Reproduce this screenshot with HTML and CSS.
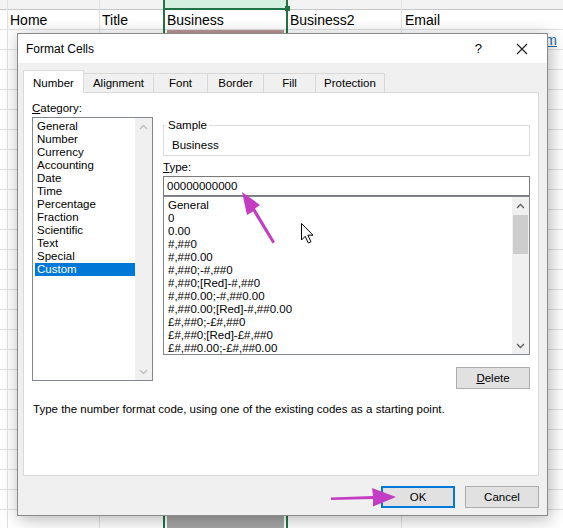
FILE: index.html
```html
<!DOCTYPE html>
<html lang="en">
<head>
    <meta charset="UTF-8">
    <title>Format Cells</title>
    <link rel="stylesheet" href="styles.css">
</head>
<body>

    <!-- Spreadsheet behind the dialog -->
    <div class="sheet">
        <div class="col c0"><div class="hd"></div><div class="cell"></div></div>
        <div class="col c1"><div class="hd"></div><div class="cell">Home</div></div>
        <div class="col c2"><div class="hd"></div><div class="cell">Title</div></div>
        <div class="col c3 sel">
            <div class="hd"></div>
            <div class="cell">Business</div>
            <div class="shade-top"></div>
            <div class="shade"></div>
        </div>
        <div class="col c4"><div class="hd"></div><div class="cell">Business2</div></div>
        <div class="col c5">
            <div class="hd"></div>
            <div class="cell">Email</div>
            <div class="cell link-cell"><a class="link">a@b.com</a></div>
        </div>
    </div>

    <!-- Format Cells dialog -->
    <div class="dialog">
        <div class="titlebar">
            <span class="title">Format Cells</span>
            <span class="help">?</span>
            <svg class="close" width="12" height="12" viewBox="0 0 12 12">
                <path d="M1 1 L11 11 M11 1 L1 11" stroke="#1a1a1a" stroke-width="1.1" fill="none"/>
            </svg>
        </div>

        <div class="dlg-body">
            <div class="tabs">
                <div class="tab active">Number</div>
                <div class="tab">Alignment</div>
                <div class="tab">Font</div>
                <div class="tab">Border</div>
                <div class="tab">Fill</div>
                <div class="tab">Protection</div>
            </div>

            <div class="panel">
                <div class="cols">
                    <div class="left">
                        <div class="label"><u>C</u>ategory:</div>
                        <div class="listbox cat-list">
                            <ul class="items">
                                <li>General</li>
                                <li>Number</li>
                                <li>Currency</li>
                                <li>Accounting</li>
                                <li>Date</li>
                                <li>Time</li>
                                <li>Percentage</li>
                                <li>Fraction</li>
                                <li>Scientific</li>
                                <li>Text</li>
                                <li>Special</li>
                                <li class="picked">Custom</li>
                            </ul>
                            <div class="scroll disabled">
                                <svg class="chev" width="9" height="6" viewBox="0 0 9 6"><path d="M1 5 L4.5 1.5 L8 5" stroke="currentColor" stroke-width="1.3" fill="none"/></svg>
                                <div class="track"></div>
                                <svg class="chev" width="9" height="6" viewBox="0 0 9 6"><path d="M1 1 L4.5 4.5 L8 1" stroke="currentColor" stroke-width="1.3" fill="none"/></svg>
                            </div>
                        </div>
                    </div>

                    <div class="right">
                        <fieldset class="sample">
                            <legend>Sample</legend>
                            <div class="sample-value">Business</div>
                        </fieldset>

                        <div class="label type-label"><u>T</u>ype:</div>
                        <div class="type-input">00000000000</div>

                        <div class="listbox fmt-list">
                            <ul class="items">
                                <li>General</li>
                                <li>0</li>
                                <li>0.00</li>
                                <li>#,##0</li>
                                <li>#,##0.00</li>
                                <li>#,##0;-#,##0</li>
                                <li>#,##0;[Red]-#,##0</li>
                                <li>#,##0.00;-#,##0.00</li>
                                <li>#,##0.00;[Red]-#,##0.00</li>
                                <li>£#,##0;-£#,##0</li>
                                <li>£#,##0;[Red]-£#,##0</li>
                                <li>£#,##0.00;-£#,##0.00</li>
                            </ul>
                            <div class="scroll">
                                <svg class="chev" width="9" height="6" viewBox="0 0 9 6"><path d="M1 5 L4.5 1.5 L8 5" stroke="currentColor" stroke-width="1.3" fill="none"/></svg>
                                <div class="track"><div class="thumb"></div></div>
                                <svg class="chev" width="9" height="6" viewBox="0 0 9 6"><path d="M1 1 L4.5 4.5 L8 1" stroke="currentColor" stroke-width="1.3" fill="none"/></svg>
                            </div>
                        </div>

                        <div class="delete-row">
                            <button class="btn"><u>D</u>elete</button>
                        </div>
                    </div>
                </div>

                <p class="hint">Type the number format code, using one of the existing codes as a starting point.</p>
            </div>

            <div class="footer">
                <button class="btn primary">OK</button>
                <button class="btn">Cancel</button>
            </div>
        </div>
    </div>

    <!-- Annotation arrows and mouse pointer drawn over the screenshot -->
    <svg class="marks" width="563" height="528" viewBox="0 0 563 528">
        <path d="M275 242 L272.5 243.5 L253 211.5 L247 215 L242 192 L260 205 L255 208.5 Z" fill="#c43cc4"/>
        <path d="M331 497.5 L373 496 L372 488 L396 497 L373 506.5 L373 499 L331 500 Z" fill="#c43cc4"/>
        <path d="M301.5 223.5 L301.5 240 L305.2 236.3 L308.3 243 L311 241.8 L307.9 235.2 L313 235.2 Z" fill="#fff" stroke="#000" stroke-width="1" stroke-linejoin="round"/>
    </svg>

</body>
</html>
```

FILE: styles.css
```css
/* Page */
body {
    margin: 0;
    width: 563px;
    height: 528px;
    overflow: hidden;
    position: relative;
    font-family: "Liberation Sans", Arial, sans-serif;
    font-size: 11.5px;
    color: #000;
}

/* Spreadsheet grid */
.sheet {
    display: flex;
    height: 528px;
    background: repeating-linear-gradient(to bottom, #fff 0 19px, #e1e1e1 19px 20px);
    background-position: 0 10px;
    font-size: 14px;
}

.col {
    box-sizing: border-box;
    height: 100%;
    border-right: 1px solid #e1e1e1;
    display: flex;
    flex-direction: column;
}

.c0 { width: 8px; }
.c1 { width: 92px; }
.c2 { width: 63px; border-right: none; }
.c3 { width: 125px; }
.c4 { width: 114px; }
.c5 { flex: 1; border-right: none; }

.hd {
    height: 9px;
    flex: none;
    background: #f3f3f3;
    border-bottom: 1px solid #c6c6c6;
}

.cell {
    height: 19px;
    flex: none;
    padding-left: 2px;
    line-height: 21px;
    white-space: nowrap;
    overflow: hidden;
}

.c5 .cell { padding-left: 3px; }

.link-cell {
    margin-top: 1px;
    text-align: right;
    padding-right: 6px;
}

.link {
    color: #1d6ea8;
    text-decoration: underline;
}

/* Selected column */
.sel {
    border-left: 2px solid #217346;
    border-right: 2px solid #217346;
    position: relative;
}

.sel .hd {
    background: #d3f0e0;
    border-bottom: 2px solid #217346;
    height: 8px;
}

.sel .hd::after {
    content: '';
    position: absolute;
    right: -4px;
    top: 6px;
    width: 5px;
    height: 5px;
    background: #217346;
}

.shade-top {
    height: 19px;
    flex: none;
    margin: 1px 2px 0;
    background: #b99696;
}

.shade {
    flex: 1;
    background: linear-gradient(to bottom, #b5b5b5, #a6a6a6);
    margin: 0 2px;
}

/* Dialog */
.dialog {
    position: absolute;
    left: 17px;
    top: 33px;
    width: 531px;
    height: 483px;
    box-sizing: border-box;
    border: 1px solid #8a8a8a;
    background: #f0f0f0;
    box-shadow: 2px 3px 16px rgba(0, 0, 0, 0.3);
}

.titlebar {
    height: 29px;
    background: #fff;
    display: flex;
    align-items: center;
    padding-left: 8px;
}

.title {
    flex: 1;
    font-size: 12px;
}

.help {
    font-size: 13px;
    margin-right: 34px;
}

.close {
    margin-right: 19px;
}

.dlg-body {
    padding: 7px 8px 0 5px;
}

/* Tabs */
.tabs {
    display: grid;
    grid-template-columns: 60px 70px 54px 56px 52px 69px;
    align-items: end;
    height: 22px;
    padding-left: 1px;
}

.tab {
    box-sizing: border-box;
    height: 19px;
    line-height: 18px;
    text-align: center;
    border: 1px solid #d9d9d9;
    border-bottom: none;
    margin-left: -1px;
    background: #f0f0f0;
}

.tab.active {
    height: 23px;
    padding-top: 3px;
    margin-bottom: -1px;
    background: #fff;
    position: relative;
    z-index: 1;
}

/* Tab panel */
.panel {
    box-sizing: border-box;
    height: 384px;
    background: #fff;
    border: 1px solid #d9d9d9;
    padding: 9px 8px 0 8px;
}

.cols {
    display: flex;
    gap: 10px;
}

.label {
    height: 13px;
    line-height: 13px;
    margin-bottom: 2px;
}

.listbox {
    box-sizing: border-box;
    border: 1px solid #828790;
    display: flex;
    background: #fff;
}

.items {
    list-style: none;
    margin: 0;
    padding: 2px 0 0 2px;
    flex: 1;
}

.items li {
    height: 13px;
    line-height: 13px;
    padding-left: 2px;
    white-space: nowrap;
}

.items li.picked {
    background: #0078d7;
    color: #fff;
}

.cat-list {
    width: 121px;
    height: 264px;
}

.scroll {
    width: 17px;
    background: #f0f0f0;
    display: flex;
    flex-direction: column;
    align-items: center;
    color: #606060;
    padding: 6px 0 5px;
    box-sizing: border-box;
}

.scroll.disabled {
    color: #bfbfbf;
}

.track {
    flex: 1;
    align-self: stretch;
    padding-top: 6px;
}

.thumb {
    height: 39px;
    margin: 0 1px;
    background: #cdcdcd;
}

/* Right column */
.right {
    flex: 1;
    padding-top: 16px;
}

.sample {
    margin: 0;
    padding: 0 2px 2px;
    border: 1px solid #dcdcdc;
}

.sample legend {
    padding: 0 2px;
    line-height: 15px;
}

.sample-value {
    padding: 5px 0 0 6px;
    line-height: 15px;
}

.type-label {
    margin-top: 5px;
    margin-bottom: 2px;
}

.type-input {
    box-sizing: border-box;
    height: 20px;
    line-height: 18px;
    border: 1px solid #7a7a7a;
    padding-left: 3px;
}

.fmt-list {
    height: 159px;
}

.delete-row {
    display: flex;
    justify-content: flex-end;
    margin-top: 12px;
}

/* Buttons */
.btn {
    box-sizing: border-box;
    width: 74px;
    height: 22px;
    font-family: inherit;
    font-size: 11.5px;
    color: #000;
    background: #e1e1e1;
    border: 1px solid #adadad;
    padding: 0;
}

.btn.primary {
    border: 2px solid #0078d7;
}

.hint {
    margin: 13px 0 0 1px;
    line-height: 14px;
}

.footer {
    display: flex;
    justify-content: flex-end;
    gap: 10px;
    margin-top: 10px;
}

/* Overlay marks */
.marks {
    position: absolute;
    left: 0;
    top: 0;
    pointer-events: none;
}
```
